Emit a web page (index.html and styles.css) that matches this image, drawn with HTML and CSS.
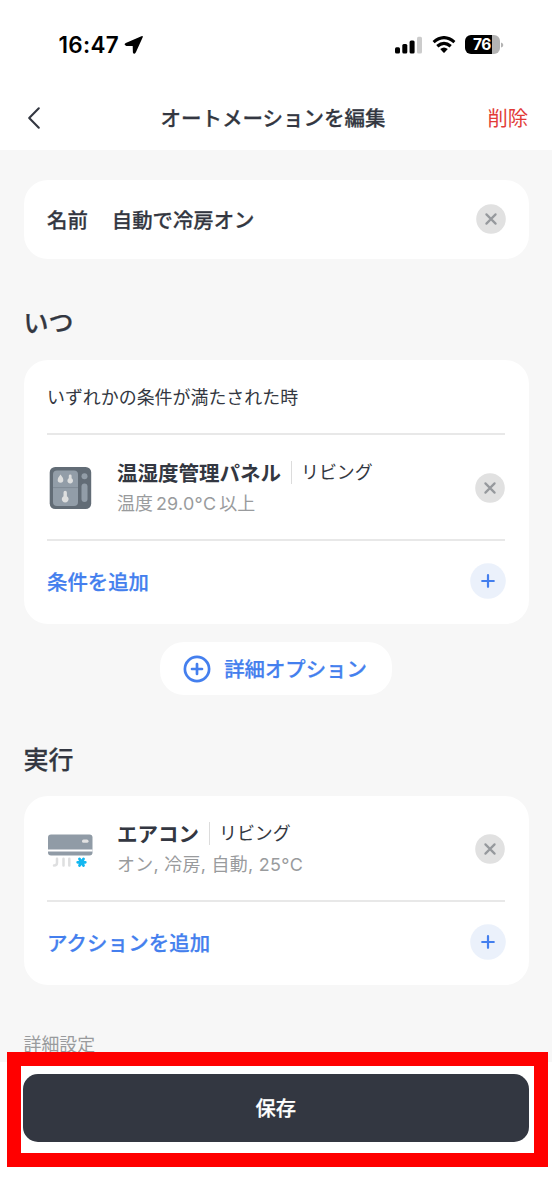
FILE: index.html
```html
<!DOCTYPE html>
<html lang="ja">
<head>
<meta charset="utf-8">
<title>オートメーションを編集</title>
<link rel="stylesheet" href="styles.css">
</head>
<body>
<div class="screen">
  <div class="status">
    <span class="time">16:47</span>
    <svg class="location" width="20" height="20" viewBox="0 0 20 20"><path d="M17.4 1.3 Q19.4 .5 18.6 2.5 L11.9 17.3 Q10 20.3 8.9 17.4 L8.7 11.1 L2.3 10.9 Q-.9 9.6 1.8 7.9Z"/></svg>
    <svg class="signal" width="28" height="18" viewBox="0 0 28 18"><rect x="0" y="11.2" width="5" height="6.3" rx="1.5"/><rect x="7.3" y="8" width="5" height="9.5" rx="1.5"/><rect x="14.6" y="4.4" width="5" height="13.1" rx="1.5"/><rect class="faint" x="22" y=".7" width="5" height="16.8" rx="1.5"/></svg>
    <svg class="wifi" width="24" height="18" viewBox="0 0 24 18"><path class="arc" d="M1.6 6.1 Q12 -2.8 22.4 6.1M5.3 10.3 Q12 4.3 18.7 10.3"/><path d="M8.2 13.1 Q12 9.8 15.8 13.1 L12.6 16.4 Q12 17 11.4 16.4Z"/></svg>
    <div class="battery"><span class="level">76</span></div>
    <svg class="nub" width="3" height="6" viewBox="0 0 3 6"><path d="M0 .5 Q2.3 1 2.3 3 Q2.3 5 0 5.5Z"/></svg>
  </div>
  <header class="nav">
    <svg class="back" width="14" height="24" viewBox="0 0 14 24"><path d="M11.8 2.3 L2.2 12 L11.8 21.7"/></svg>
    <h1 class="title">オートメーションを編集</h1>
    <span class="delete">削除</span>
  </header>
  <main class="content">
    <section class="card name-card">
      <span class="label">名前</span><span class="value">自動で冷房オン</span>
      <svg class="clear name-clear" width="30" height="30" viewBox="0 0 30 30"><circle cx="15" cy="15" r="14.8"/><path d="M10.4 10.4 19.6 19.6M19.6 10.4 10.4 19.6"/></svg>
    </section>
    <h2 class="heading">いつ</h2>
    <section class="card">
      <p class="rule">いずれかの条件が満たされた時</p>
      <div class="item">
        <svg class="device" width="46" height="44" viewBox="0 0 46 44"><rect x="1.7" y="1" width="41.5" height="42" rx="5.5" fill="#626c76"/><rect x="5" y="4.5" width="25" height="35.5" rx="4" fill="#929da8"/><path d="M5 21.6H30" stroke="#7f8b96"/><g fill="#dedfdf"><path d="M12.5 8.5 Q9.7 11.8 9.7 14 A2.8 2.8 0 0 0 15.3 14 Q15.3 11.8 12.5 8.5Z"/><path d="M20.8 9.8 a1.4 1.4 0 0 1 2.8 0 V12.2 A2.8 2.8 0 1 1 20.8 12.2Z"/><path d="M15.5 26.5 a1.7 1.7 0 0 1 3.4 0 V30.2 A3.4 3.4 0 1 1 15.5 30.2Z"/></g><g fill="#929da8"><circle cx="36.5" cy="10.3" r="3"/><rect x="33.5" y="17.5" width="6" height="18.5" rx="3"/></g></svg>
        <div class="details">
          <div class="device-line"><b class="device-name">温湿度管理パネル</b><span class="room">リビング</span></div>
          <p class="state">温度<span class="temperature">29.0°C</span>以上</p>
        </div>
        <svg class="clear" width="30" height="30" viewBox="0 0 30 30"><circle cx="15" cy="15" r="14.8"/><path d="M10.4 10.4 19.6 19.6M19.6 10.4 10.4 19.6"/></svg>
      </div>
      <div class="add"><span>条件を追加</span><svg width="36" height="36" viewBox="0 0 36 36"><circle cx="18" cy="18" r="17.8"/><path d="M12.2 18H23.8M18 12.2V23.8"/></svg></div>
    </section>
    <div class="options"><svg width="28" height="28" viewBox="0 0 28 28"><circle cx="14" cy="14" r="12.1"/><path d="M9 14H19M14 9V19"/></svg><span>詳細オプション</span></div>
    <h2 class="heading run-heading">実行</h2>
    <section class="card">
      <div class="item action-item">
        <svg class="device" width="46" height="44" viewBox="0 0 46 44"><rect x="0" y="7.6" width="44.5" height="21" rx="3" fill="#909ba6"/><path d="M0 23.5H44.5" stroke="#fff" stroke-width="1.8"/><rect x="34" y="12.6" width="6.5" height="3.2" rx="1.6" fill="#e2e2e2"/><path d="M9 31.8V35.8Q9 38.6 6 38.6M15.5 31.8V38.6M21.3 31.8V38.6" fill="none" stroke="#dedfe0" stroke-width="2.5" stroke-linecap="round"/><path d="M29.7 35.3H37.3M31.5 32 35.5 38.6M35.5 32 31.5 38.6" stroke="#13b7f0" stroke-width="2.8" stroke-linecap="round"/></svg>
        <div class="details">
          <div class="device-line"><b class="device-name">エアコン</b><span class="room">リビング</span></div>
          <p class="state action-state">オン, 冷房, 自動, 25°C</p>
        </div>
        <svg class="clear" width="30" height="30" viewBox="0 0 30 30"><circle cx="15" cy="15" r="14.8"/><path d="M10.4 10.4 19.6 19.6M19.6 10.4 10.4 19.6"/></svg>
      </div>
      <div class="add add-action"><span>アクションを追加</span><svg width="36" height="36" viewBox="0 0 36 36"><circle cx="18" cy="18" r="17.8"/><path d="M12.2 18H23.8M18 12.2V23.8"/></svg></div>
    </section>
    <p class="more">詳細設定</p>
  </main>
  <footer class="footer">
    <div class="save-frame"><div class="save">保存</div></div>
  </footer>
</div>
</body>
</html>
```
FILE: styles.css
```css
* { box-sizing: border-box; }
body, h1, h2, p { margin: 0; }
body { font-family: Inter, "Noto Sans CJK JP", sans-serif; color: #333741; background: #fff; }
svg { display: block; flex: none; }
.screen { width: 552px; height: 1200px; overflow: hidden; display: flex; flex-direction: column; }

.status { height: 86px; padding: 3px 48px 0 58.5px; display: flex; align-items: center; color: #000; flex: none; }
.time { font-size: 22.5px; font-weight: 600; width: 62.5px; letter-spacing: .3px; white-space: nowrap; }
.location { margin-left: 3px; }
.signal { margin-left: auto; }
.faint { fill: #ccc; }
.wifi { margin-left: 9px; }
.arc { fill: none; stroke: #000; stroke-width: 3.2; }
.battery { width: 35px; height: 19px; margin-left: 9px; border-radius: 6px; background: linear-gradient(90deg, #000 76%, #b3b3b3 76%); color: #fff; text-align: center; font-size: 15.5px; line-height: 19px; font-weight: 700; letter-spacing: -.3px; }
.level { padding-right: 1px; }
.nub { fill: #b3b3b3; margin-left: 1px; }

.nav { height: 64px; padding: 0 24px 0 27px; display: grid; grid-template-columns: 51px 1fr 60px; align-items: center; flex: none; }
.back { fill: none; stroke: #333741; stroke-width: 2.1; stroke-linecap: round; stroke-linejoin: round; }
.title { padding-top: 1px; font-size: 20.5px; line-height: 30px; font-weight: 500; text-align: center; }
.title, .name-card, .heading, .add span, .options span, .save { -webkit-text-stroke: .25px currentColor; }
.delete { padding-top: 1px; font-size: 20.3px; line-height: 30px; color: #e23b37; text-align: right; }

.content { height: 912px; flex: none; padding: 29.5px 23.5px 0; background: #f7f7f7; overflow: hidden; }
.card { padding: 0 24px 0 23.5px; border-radius: 24px; background: #fff; }
.name-card { height: 79px; display: flex; align-items: center; font-size: 20.4px; font-weight: 500; }
.name-card span { padding-bottom: 1px; }
.value { margin-left: 24px; }
.name-clear { margin-right: -1px; }
.clear { margin-left: auto; fill: #e1e1e1; }
.clear path { stroke: #96999d; stroke-width: 2.2; stroke-linecap: round; }
.heading { height: 101.5px; padding-top: 44px; font-size: 25px; line-height: 40px; font-weight: 500; }
.rule { height: 75px; border-bottom: 2px solid #e8e8e8; font-size: 17.95px; line-height: 75px; }
.item { height: 106px; padding-top: 1px; border-bottom: 2px solid #e8e8e8; display: flex; align-items: center; }
.action-item { height: 105.5px; padding-top: 2px; }
.device { margin-left: .5px; }
.details { margin-left: 23.5px; padding-top: 1px; }
.device-line { display: flex; align-items: center; height: 31px; }
.device-name { font-size: 20.5px; font-weight: 700; }
.room { margin-left: 10px; padding-left: 9px; border-left: 1px solid #dcdcdc; font-size: 17.95px; line-height: 23px; }
.state { font-size: 17.95px; line-height: 32px; color: #999b9d; }
.temperature { margin: 0 3px; letter-spacing: .25px; }
.action-state { letter-spacing: .3px; }
.add { height: 83px; padding-bottom: 3px; display: flex; align-items: center; justify-content: space-between; color: #447fee; font-size: 20.4px; font-weight: 500; }
.add svg { margin-right: -1px; fill: #ebf1fb; }
.add path { stroke: #447fee; stroke-width: 2.2; stroke-linecap: round; }
.add-action { padding-bottom: 2px; }
.add-action span { letter-spacing: .15px; padding-bottom: 1px; }
.options { width: 232px; height: 53px; margin: 18px auto 0; padding-right: 2px; border-radius: 24px; background: #fff; display: flex; align-items: center; justify-content: center; gap: 13px; color: #447fee; font-size: 20.4px; font-weight: 500; }
.options span { padding-bottom: 2px; }
.options svg { fill: none; stroke: #447fee; stroke-width: 2.7; stroke-linecap: round; }
.run-heading { height: 101px; padding-top: 45px; }
.more { margin-top: 45px; font-size: 17.9px; line-height: 30px; color: #999b9d; }

.footer { flex: none; margin-top: -10.5px; padding: 0 4.5px 0 6.5px; }
.save-frame { height: 115px; border: 14px solid #f00; padding: 8.5px 5px 10.5px 2.5px; background: #fff; }
.save { height: 67.5px; border-radius: 15px; background: #333741; color: #fff; text-align: center; font-size: 20.3px; line-height: 69px; font-weight: 500; }
```
